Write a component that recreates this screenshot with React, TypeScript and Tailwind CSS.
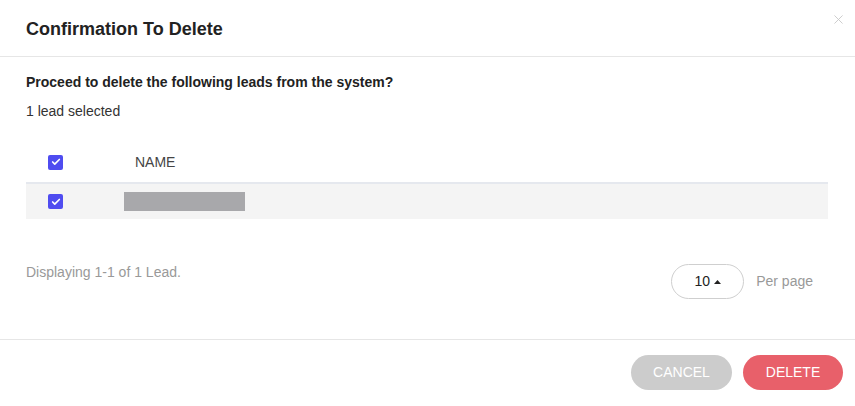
import { Check } from 'lucide-react';

function Checkbox() {
  return (
    <span className="flex h-[15px] w-[15px] items-center justify-center rounded-[2px] bg-[#4f4cf0]">
      <Check className="h-[10px] w-[10px] text-white" strokeWidth={4} />
    </span>
  );
}

export default function App() {
  return (
    <div
      className="relative flex h-[406px] w-[855px] flex-col bg-white text-[#222]"
      style={{ fontFamily: '"Liberation Sans", Arial, sans-serif' }}
    >
      {/* Header */}
      <div className="flex h-[57px] shrink-0 items-center border-b border-[#e6e6e6] px-[26px] pt-[1px]">
        <h2 className="text-[18px] font-bold leading-5 text-[#222]">Confirmation To Delete</h2>
      </div>
      <button className="absolute right-[10px] top-[13px] p-[2px] text-[#c8c8c8]">
        <svg className="h-[9px] w-[9px]" viewBox="0 0 10 10" fill="none" stroke="currentColor" strokeWidth="1">
          <path d="M0.5 0.5l9 9M9.5 0.5l-9 9" />
        </svg>
      </button>

      {/* Body */}
      <div className="flex h-[282px] shrink-0 flex-col px-[26px]">
        <p className="mt-[17px] text-[14px] font-bold leading-4 text-[#222]">
          Proceed to delete the following leads from the system?
        </p>
        <p className="mt-[13px] text-[14px] leading-4 text-[#333]">1 lead selected</p>

        <div className="mt-[23px] w-[802px]">
          <div className="flex h-[42px] items-center border-b-2 border-[#e5e8ee]">
            <div className="w-[109px] pl-[22px]">
              <Checkbox />
            </div>
            <span className="text-[14px] text-[#444]">NAME</span>
          </div>
          <div className="flex h-[35px] items-center bg-[#f4f4f4]">
            <div className="w-[98px] pl-[22px]">
              <Checkbox />
            </div>
            <span className="h-[19px] w-[121px] bg-[#a8a8ab]" />
          </div>
        </div>

        <div className="mt-[45px] flex items-start justify-between pr-[16px]">
          <span className="text-[14px] leading-4 text-[#999]">Displaying 1-1 of 1 Lead.</span>
          <div className="flex items-center gap-[12px]">
            <button className="flex h-[35px] w-[73px] items-center justify-center gap-[4px] rounded-full border border-[#cfcfcf] text-[14px] text-[#222]">
              10
              <svg className="h-[4px] w-[7px]" viewBox="0 0 7 4" fill="currentColor">
                <path d="M3.5 0L7 4H0z" />
              </svg>
            </button>
            <span className="text-[14px] text-[#999]">Per page</span>
          </div>
        </div>
      </div>

      {/* Footer */}
      <div className="flex flex-1 items-start justify-end gap-[11px] border-t border-[#e6e6e6] pr-[12px] pt-[15px]">
        <button className="h-[35px] w-[101px] rounded-full bg-[#cccccc] text-[14px] text-white">CANCEL</button>
        <button className="h-[35px] w-[100px] rounded-full bg-[#e8606a] text-[14px] text-white">DELETE</button>
      </div>
    </div>
  );
}
